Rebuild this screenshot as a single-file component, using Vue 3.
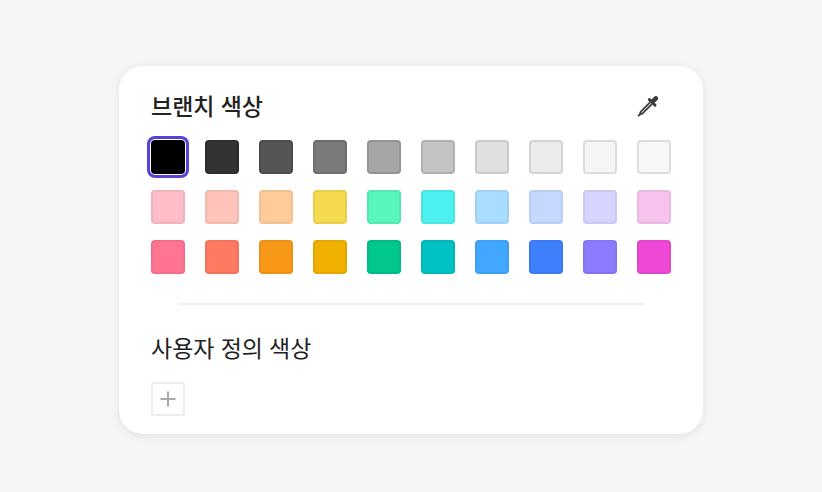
<template>
  <div class="page">
    <div class="card">
      <div class="head">
        <span class="title">브랜치 색상</span>
        <button class="picker">
          <svg width="24" height="24" viewBox="0 0 24 24" fill="none">
            <path d="M15 6 L18 3 C19 1.8 20.6 1.8 21.5 2.7 C22.4 3.6 22.4 5.2 21.2 6.2 L18 9.2 Z" fill="#3a3a3a"/>
            <path d="M13.4 5.6 L19 11.2" stroke="#3a3a3a" stroke-width="3" stroke-linecap="round"/>
            <path d="M14 8.4 L4.8 17.6 L3.6 20.6 L6.6 19.4 L15.8 10.2" stroke="#3a3a3a" stroke-width="1.7" stroke-linejoin="round"/>
            <path d="M3.6 20.6 L2 22.2" stroke="#3a3a3a" stroke-width="1.6"/>
          </svg>
        </button>
      </div>
      <div class="grid">
        <div
          v-for="(c, i) in colors"
          :key="i"
          class="swatch"
          :class="{ selected: i === 0, soft: i >= 10 }"
          :style="{ backgroundColor: c }"
        ></div>
      </div>
      <div class="divider"></div>
      <div class="sub">사용자 정의 색상</div>
      <button class="add">
        <svg width="16" height="16" viewBox="0 0 16 16">
          <path d="M8 0.5 V15.5 M0.5 8 H15.5" stroke="#a9a9ab" stroke-width="2"/>
        </svg>
      </button>
    </div>
  </div>
</template>

<script setup>
const colors = [
  '#000000', '#333333', '#555555', '#7a7a7a', '#a5a5a5', '#c4c4c4', '#e0e0e0', '#ebebeb', '#f5f5f5', '#f7f7f9',
  '#fdbcc6', '#ffc3b9', '#ffcc99', '#f5da4f', '#58f5bd', '#4cf1ef', '#aadcff', '#c5d8ff', '#d6d3ff', '#f7c3ec',
  '#ff7490', '#ff7a60', '#f79818', '#f0b000', '#00c78e', '#00c2c4', '#41a8ff', '#3f80ff', '#8c7aff', '#ef48d6'
]
</script>

<style scoped>
.page {
  width: 822px;
  height: 492px;
  box-sizing: border-box;
  padding-top: 8px;
  background: #f5f5f5;
  display: flex;
  align-items: center;
  justify-content: center;
  font-family: "Noto Sans CJK KR", sans-serif;
}
.card {
  width: 584px;
  height: 368px;
  box-sizing: border-box;
  padding: 24px 32px 18px;
  background: #fff;
  border-radius: 24px;
  box-shadow: 0 2px 8px rgba(0, 0, 0, 0.08);
}
.head {
  display: flex;
  justify-content: space-between;
  align-items: center;
  height: 34px;
  margin-bottom: 16px;
}
.title {
  font-size: 23px;
  font-weight: 500;
  color: #222;
  word-spacing: 1px;
  padding-bottom: 4px;
}
.picker {
  border: 0;
  padding: 0;
  background: none;
  display: flex;
  margin: 0 11px 2px 0;
}
.grid {
  display: grid;
  grid-template-columns: repeat(10, 34px);
  gap: 16px 20px;
}
.swatch {
  width: 34px;
  height: 34px;
  box-sizing: border-box;
  border: 2px solid rgba(0, 0, 0, 0.1);
  border-radius: 4px;
}
.swatch.soft {
  border-color: rgba(0, 0, 0, 0.05);
}
.swatch.selected {
  border: 0;
  box-shadow: 0 0 0 1px #fff, 0 0 0 4px #5b3fd6;
}
.divider {
  height: 2px;
  margin: 29px 26px 25px 27px;
  background: #eeeeee;
}
.sub {
  font-size: 23px;
  line-height: 34px;
  color: #222;
  word-spacing: 1px;
  margin-bottom: 18px;
}
.add {
  width: 34px;
  height: 34px;
  padding: 0;
  background: #fff;
  border: 2px solid #ececec;
  border-radius: 3px;
  display: flex;
  align-items: center;
  justify-content: center;
}
</style>
